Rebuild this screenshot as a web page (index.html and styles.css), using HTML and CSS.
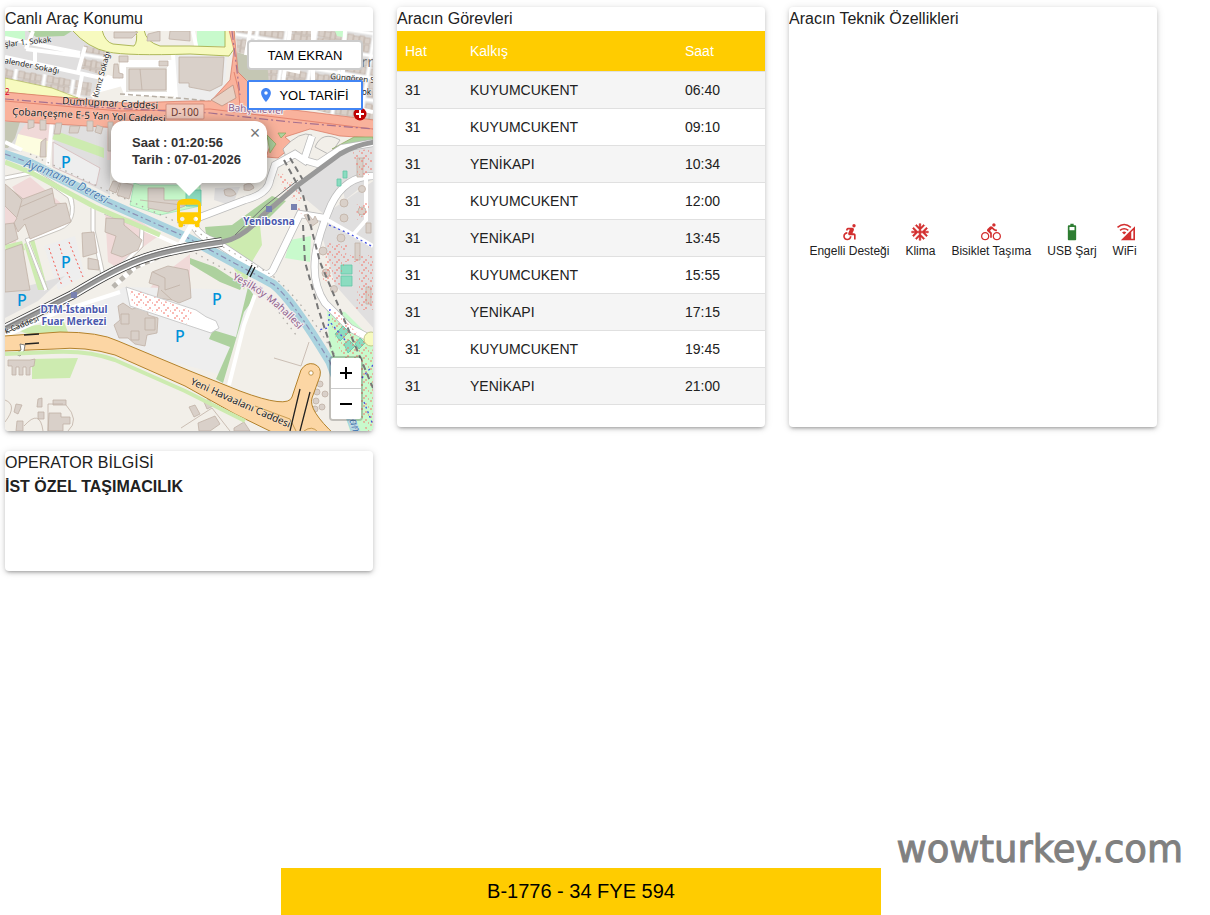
FILE: index.html
```html
<!DOCTYPE html>
<html lang="tr">
<head>
<meta charset="utf-8">
<title>B-1776 - 34 FYE 594</title>
<meta name="viewport" content="width=device-width, initial-scale=1">
<link rel="stylesheet" href="styles.css">
</head>
<body>
<main class="cards">
  <section class="card">
    <h2 class="card-title">Canlı Araç Konumu</h2>
    <div class="map">
      <svg class="map-canvas" viewBox="5 31 368 400" preserveAspectRatio="xMidYMid slice" role="img" aria-label="Yenibosna haritası">
        <defs>
          <pattern id="blocks" width="29" height="22" patternUnits="userSpaceOnUse" patternTransform="rotate(9)">
            <rect width="29" height="22" fill="#e0dfdf"/>
            <g fill="#d9d0c9" stroke="#c0b1a6" stroke-width=".7"><path d="M1 1h6v7H1zM7 2h6v6H7zM13 1h5v8h-5zM18 2h6v6h-6zM1 10h5v6H1zM6 9h7v7H6zM13 10h6v6h-6zM19 9h5v7h-5z"/></g>
            <path d="M0 19h29M27 0v22" stroke="#fff" stroke-width="3"/>
          </pattern>
          <pattern id="trees" width="9" height="8" patternUnits="userSpaceOnUse">
            <path d="M1 1h2M6 3v2M3 6h2M8 7h1" stroke="#f3766c" stroke-width="1"/>
          </pattern>
          <path id="river-label" d="M24 167Q54 175 112 208"/>
          <path id="mahalle-label" d="M232 279Q270 296 306 338"/>
          <path id="havaalani-label" d="M190 384Q232 403 296 431"/>
          <path id="e5-label" d="M12 115L190 124"/>
        </defs>
        <rect x="5" y="31" width="368" height="400" fill="#f2efe9"/>

        <!-- land use -->
        <path fill="#e0dfdf" d="M5 31H74L108 50 92 99 5 76z"/>
        <path fill="#c8facc" d="M5 31H25V40L5 38z"/>
        <path fill="#aed1a0" d="M28 31H72L64 36 36 37z"/>
        <path fill="#e0dfdf" d="M5 120H110V195L52 166 54 140 25 128 22 152 5 150z"/>
        <path fill="#c5c7b4" d="M5 122H20L15 138 8 148H5z"/>
        <path fill="#f0d9d8" d="M28 121H50V144L18 134zM107 122H115V160H107z"/>
        <path fill="#fdfde0" d="M18 134L48 141 46 158 14 148z"/>
        <path fill="#cdebb0" d="M56 131L104 148V158L52 139z"/>
        <path fill="#eee" d="M53 142L100 168 96 186 53 167z" stroke="#d9c4c4"/>
        <path fill="#f0d9d8" d="M12 187L30 177 62 204 30 215zM105 212L140 221 160 235 150 242 116 267 108 262zM157 279L190 254V300L148 291zM5 206H18L16 243H5z"/>
        <path fill="#eee" d="M44 246L75 236 85 276 58 290z"/>
        <path fill="#e0dfdf" d="M5 292L65 276 38 301 5 318z"/>
        <path fill="#eee" d="M95 302L124 287 255 290 240 330 222 375 110 345 68 331z"/>
        <path fill="#c8facc" stroke="#8fdcae" stroke-width=".6" d="M134 183L140 185H200V206L160 215 130 205z"/>
        <path fill="#e0dfdf" d="M215 188L240 187 232 206 214 200zM290 186L340 156 345 185 325 215zM318 219L375 180V330L335 285zM335 150L373 145V178L345 200z"/>
        <path fill="#cdebb0" d="M222 243L260 225 262 245 253 260 244 290z M32 359L78 358 70 378 32 379zM12 328L64 322 68 332 35 337zM5 245L22 241 25 250 6 255z"/>
        <path fill="#add19e" d="M205 227L232 225 272 196 286 201 265 222 225 242 207 241zM248 287L255 297 244 312 223 383 216 379 230 347 209 339 213 330 236 337zM190 258L215 267 243 285 240 290 220 282 190 264z"/>
        <path fill="#c8facc" d="M290 240L311 236 310 262 285 258zM327 310L345 312 373 340V431H350L331 370z"/>
        <path fill="#cdebb0" d="M24 244L34 239 48 290 38 290z"/>
        <path fill="#c5c7b4" d="M237 52L268 62 270 82 236 79z"/>
        <path fill="#eee" d="M172 53L227 56 225 88 210 103H178z"/>
        <path fill="url(#blocks)" d="M236 31H373V125L270 98 267 60 237 52z"/>
        <path fill="url(#blocks)" d="M5 67L92 83 90 96 42 90 5 80zM84 45L108 52 99 74 80 68z"/>
        <path fill="#fff" stroke="#fff" stroke-width="4" d="M108 77L122 82V62H172V94H126L122 84 97 91z"/>
        <path fill="#e4e1dc" d="M126 67H167V92H126z"/>
        <path fill="#c8facc" d="M197 31H226V46H197zM335 31H347V38L337 36z"/>

        <!-- minor streets -->
        <g fill="none" stroke="#fff" stroke-width="4">
          <path d="M5 38L80 53M26 49L80 56M5 57L120 82M35 51V63M85 47L78 72M173 54L176 98M197 50L193 31M52 120L48 165M82 75L78 97M33 31L26 49M108 77L92 97"/>
          <path d="M5 142L22 150M250 61L300 72M265 88L373 112M290 31L282 90M313 31V106M345 31L341 110M250 31L246 55"/>
        </g>
        <path fill="none" stroke="#b7afa5" stroke-width="1.5" stroke-dasharray="5 3" d="M120 94L190 99 214 102"/>

        <!-- yellow roads -->
        <path fill="#f7fabf" stroke="#a6b14c" stroke-width=".9" d="M72 30Q88 48 108 52T190 54L229 56 234 49V30H225V47L190 46H160Q146 42 144 30H136Q138 42 134 46L113 44Q105 42 102 30z"/>
        <path fill="#f7fabf" stroke="#a6b14c" stroke-width=".6" d="M5 78L52 88 78 98 50 97 5 92z"/>

        <!-- motorway -->
        <path fill="#f9b29c" stroke="#d7735c" stroke-width=".7" d="M4 92L125 103 190 101 211 101 230 80 234 50 229 30H234L238 72 248 82 262 90 270 107 310 112 374 120V138L340 136 310 129 285 137 294 145 278 158 266 157 272 140 222 128H120L4 121z"/>
        <path fill="none" stroke="#de7763" stroke-width=".8" d="M5 101L120 111 210 109 373 129M234 72Q240 90 240 106"/>
        <path fill="none" stroke="#a7718f" stroke-width="1.2" stroke-dasharray="9 3 2 3" d="M5 99L110 108 210 113 290 122 373 129M232 31L240 95"/>
        <path fill="#e7d2c6" stroke="#c79c8c" d="M211 100L233 85 236 98 222 106z"/>
        <path fill="#f2efe9" stroke="#aaa" stroke-width=".8" d="M283 149Q300 130 312 135L302 157H286zM315 147Q322 130 340 140L330 155z"/>
        <path fill="#add19e" stroke="#8ca55a" stroke-width=".7" d="M332 149L354 137H373V142L342 148zM267 135L276 144 270 153zM278 133H286L281 138z"/>

        <!-- wider white roads -->
        <g fill="none" stroke="#bbb" stroke-width="8">
          <path d="M195 219L245 200Q268 194 270 180L275 165 295 154 304 160 312 136M304 160L318 164 342 148 373 143"/>
          <path d="M194 226Q201 238 216 242L258 270Q268 278 273 270L300 214 324 218M373 176Q345 176 331 205C316 240 306 275 325 303L350 328 373 340"/>
        </g>
        <g fill="none" stroke="#fff" stroke-width="6.5">
          <path d="M195 219L245 200Q268 194 270 180L275 165 295 154 304 160 312 136M304 160L318 164 342 148 373 143"/>
          <path d="M194 226Q201 238 216 242L258 270Q268 278 273 270L300 214 324 218M373 176Q345 176 331 205C316 240 306 275 325 303L350 328 373 340"/>
          <path stroke-width="4" d="M324 218L373 246M366 178V220L352 236M255 295L244 325 229 385M5 336L58 312 120 292"/>
        </g>
        <path fill="none" stroke="#fff" stroke-width="4" d="M5 178L35 172 70 196Q78 220 60 228L27 240 46 290M93 208V230L103 275M104 212L142 227 141 245 112 275M143 229L190 250"/>
        <path fill="none" stroke="#bdb9b3" stroke-width=".8" d="M5 176L35 170 72 194Q80 222 60 230L29 242 48 290M5 180L35 174 68 198Q76 218 60 226L25 239 44 290M91 208V230L101 275M95 208V230L105 275M104 214L140 228 139 245 112 273M106 211L144 227 143 247 114 275"/>

        <!-- river -->
        <path fill="none" stroke="#cdebb0" stroke-width="5" d="M5 162L30 172 95 207 160 235"/>
        <path fill="none" stroke="#aad3df" stroke-width="9" d="M4 154L30 163 107 202 188 238 273 284Q292 299 330 362L357 435"/>
        <path fill="none" stroke="#8b8fb5" stroke-width="1.2" stroke-dasharray="6 3 2 3" d="M5 154L30 163M107 202L188 238 273 284Q292 299 330 362L357 431"/>
        <path fill="none" stroke="#b0aca6" stroke-width="1.3" stroke-dasharray="1.5 5" d="M30 154L110 192 190 228 270 274Q300 296 338 360M190 250L262 290 296 335"/>

        <!-- buildings -->
        <g fill="#d9d0c9" stroke="#c0b1a6" stroke-width=".8">
          <path d="M129 69H166V90H129zM119 56H128V62H119zM159 61H168V66H159zM114 64H118L119 73 123 74V78H113zM179 57H224L222 85 210 91 189 87V83H179zM148 34L160 31V41H147zM170 31H190V41L169 39zM114 32H138L132 38H114z"/>
          <path d="M28 120H34V127L28 129zM40 120H46V130H40zM56 123H62L60 134H54zM70 126H80L78 133H69zM87 121H93V131H87zM97 125L103 127 101 134 95 132zM41 142L46 138V157H40zM108 122H113V151H108z"/>
          <path d="M5 184L12 190 23 199 52 188 55 204 66 203 71 222 30 239 25 224 18 232 14 223 17 218 5 206zM12 190L22 200 17 217M20 207L53 193M23 220L57 205M5 224L14 223 18 239 5 245zM5 250L22 244 30 290 5 292z"/>
          <path d="M106 218L124 219V225L142 240 138 250 122 257 111 253 116 236 105 232zM82 233L94 232 97 253 83 257zM88 258L98 260 99 270 88 269zM113 181L120 182 116 193 109 190zM121 182L133 185 129 199 117 195z"/>
          <path d="M148 188H164V200H185V206L168 212 148 208zM224 190Q232 186 236 194 231 198 225 195zM244 185Q252 181 254 188 250 192 244 190z"/>
          <path d="M152 272L168 266 188 270 190 283 191 298 179 303 172 300 157 298 159 286 149 283z"/>
          <path d="M118 306L123 303 132 309 147 305 148 315 158 318 157 333 147 335 145 346 135 344 128 338 119 338 114 325 120 320z"/>
          <path d="M8 360H30L35 359 34 366 30 367V375H26V367H23V375H19V367H16V375H12V366H8z"/>
          <path d="M38 399L42 398V407H37zM53 400H66V405H53zM16 404L22 405 18 414 14 412zM38 412H44V419H38zM49 413H61V417H70V424H63V431H48zM17 421H23V431H16zM189 407L195 405 200 414 194 417zM204 402L209 399 213 406 207 409zM198 423L215 416 220 424 210 431H199zM234 428L244 422 250 431H234z"/>
          <path d="M304 215L308 214 313 220 315 216 318 222 311 227z"/>
          <path d="M357 158H363V177H357zM355 243H360V260H355zM366 223H371V233H366zM366 287H371V304H366z"/>
          <circle cx="344" cy="203" r="4"/><circle cx="344" cy="218" r="4"/><circle cx="362" cy="189" r="3.5"/><circle cx="362" cy="211" r="4"/><circle cx="341" cy="238" r="4"/><circle cx="323" cy="251" r="4"/><circle cx="326" cy="273" r="4"/><circle cx="334" cy="289" r="3.5"/>
          <circle cx="320" cy="384" r="3"/><circle cx="317" cy="392" r="3"/><circle cx="325" cy="394" r="3"/><circle cx="316" cy="401" r="3"/><circle cx="322" cy="407" r="3"/><circle cx="315" cy="409" r="3"/>
        </g>
        <g fill="none" stroke="#c0b1a6" stroke-width=".8">
          <path d="M121 314H129V324H121zM145 318H155V330H145zM131 331H139V340H131zM140 69L142 90M153 272L165 278V290L180 285M161 290L172 300"/>
          <path d="M140 200L190 206M5 422Q18 405 5 400M24 426Q40 408 43 431M48 431V404H63M66 405Q80 420 68 431M181 428L212 408 230 431M274 358L301 366 309 342"/>
        </g>
        <g fill="#8bdcc0" stroke="#63c5a6" stroke-width=".8">
          <path d="M186 190L201 190V206H186zM337 179H341V186H337zM343 171H347V178H343zM341 265H352V274H341zM341 276H352V286H341zM335 334L343 326 349 332 340 341zM344 344L349 340 355 346 348 353zM355 344L360 338 365 343 359 349z"/>
        </g>

        <!-- paths, hedges and pitches -->
        <path fill="none" stroke="#f35e55" stroke-width="1" stroke-dasharray="2 2.5" d="M49 248L62 286M59 244L62 254M67 272L72 282M69 242L83 277"/>
        <path fill="#fff" stroke="#ccc" d="M126 287L196 310Q206 318 216 321L219 328 211 333 190 326 130 306z"/>
        <path fill="url(#trees)" d="M130 288L192 311 188 324 132 304zM276 168L300 190 302 202 285 194zM290 186L302 214 298 212zM328 243L348 245 340 285 322 280zM353 152L372 148V175H358zM360 260H373V310H356zM335 310L373 350V431H366L330 320zM356 205L370 200V212L357 220zM326 255H373V262H326z"/>
        <path fill="none" stroke="#777" stroke-width="2" stroke-dasharray="6 4" d="M284 160L303 195 313 235 320 262 373 388M290 158L303 180M303 225L305 262 318 308 345 390"/>
        <path fill="none" stroke="#4552e0" stroke-width="1.3" stroke-dasharray="2 3" d="M329 225L350 234 373 247M330 309L328 328 318 330M362 378L373 365M364 402L373 425M345 340L330 322"/>

        <!-- railway -->
        <path fill="none" stroke="#fff" stroke-width="5" d="M113 287L135 267 170 252 178 248 192 224"/>
        <path fill="none" stroke="#b9b5ae" stroke-width="5" stroke-dasharray="5 5" d="M113 287L135 267 170 252"/>
        <path fill="none" stroke="#333" stroke-width="9.5" d="M4 329L72 295Q118 267 145 258T222 242"/>
        <path fill="none" stroke="#fff" stroke-width="8" d="M4 329L72 295Q118 267 145 258T222 242"/>
        <path fill="none" stroke="#999" stroke-width="5" d="M4 329L72 295Q118 267 145 258T222 242Q243 238 263 215L298 185 340 154Q355 145 374 142"/>
        <path fill="none" stroke="#777" stroke-width="1" d="M5 327L72 293Q118 265 145 256T222 240M235 235L265 206 298 180"/>
        <path fill="none" stroke="#222" stroke-width="1.4" d="M247 275L252 265M250 277L255 267"/>

        <!-- orange road -->
        <path fill="#fcd6a4" stroke="#b3822c" stroke-width="1" d="M4 336L60 332Q100 332 118 341L190 371 240 391Q288 409 292 397L301 370Q306 362 314 364 322 367 320 376L312 398Q308 410 335 435H278L235 414 185 386 115 355Q85 346 55 349L4 351z"/>
        <path fill="none" stroke="#b3822c" stroke-width=".7" d="M255 406L290 419 296 431M304 431Q312 425 318 432"/>
        <circle cx="311" cy="373" r="2.2" fill="#fff" stroke="#b3822c" stroke-width=".8"/>
        <path fill="none" stroke="#222" stroke-width="1.3" d="M300 389L290 431M310 392L300 431M24 335L39 334M25 344L39 343"/>
        <path fill="#fff" stroke="#666" stroke-width=".8" d="M20 344L25 345 24 351 20 356 16 354 21 350z"/>
        <path fill="none" stroke="#cdebb0" stroke-width="4" d="M5 354L52 352Q88 350 115 360L185 391 245 421"/>
        <circle cx="371" cy="339" r="7" fill="#f7fabf" stroke="#c2c78a"/>

        <!-- labels -->
        <g class="street">
          <text x="5" y="47" transform="rotate(-6 5 47)" font-size="8">şlar 1. Sokak</text>
          <text x="4" y="63" transform="rotate(11 4 63)" font-size="8">alender Sokağı</text>
          <text x="98" y="98" transform="rotate(-75 98 98)" font-size="8">Kımız Sokağı</text>
          <text x="62" y="104" transform="rotate(3 62 104)" font-size="10">Dumlupınar Caddesi</text>
          <text font-size="10"><textPath href="#e5-label">Çobançeşme E-5 Yan Yol Caddesi</textPath></text>
          <text x="330" y="79" transform="rotate(5 330 79)" font-size="8">Güngören S</text>
          <text x="362" y="95" font-size="8">ok</text>
          <text x="6" y="334" transform="rotate(-22 6 334)" font-size="8">k Caddesi</text>
          <text font-size="10"><textPath href="#havaalani-label">Yeni Havaalanı Caddesi</textPath></text>
        </g>
        <rect x="166" y="104" width="38" height="15" rx="1" fill="#f0cabd" stroke="#d48f7e"/>
        <text x="171" y="116" class="shield">D-100</text>
        <text class="water"><textPath href="#river-label">Ayamama Deresi</textPath></text>
        <text x="349" y="420" class="water" transform="rotate(72 349 420)">am</text>
        <text class="area"><textPath href="#mahalle-label">Yeşilköy Mahallesi</textPath></text>
        <text x="228" y="111" class="area" transform="rotate(3 228 111)" font-size="10">Bahçelievler</text>
        <text x="361" y="67" class="area-lg">rr</text>
        <g class="station">
          <text x="269" y="225" text-anchor="middle">Yenibosna</text>
          <text x="74" y="313" text-anchor="middle">DTM-İstanbul</text>
          <text x="74" y="325" text-anchor="middle">Fuar Merkezi</text>
        </g>
        <path fill="#7981b0" d="M266 206H272V212H266zM291 204H297V210H291zM71 292H77V298H71z"/>
        <g class="parking">
          <text x="61" y="168">P</text><text x="61" y="268">P</text><text x="17" y="306">P</text><text x="212" y="305">P</text><text x="175" y="342">P</text>
        </g>
        <circle cx="360" cy="114" r="6.5" fill="#bf0000"/>
        <path stroke="#fff" stroke-width="2" d="M356 114H364M360 110V118"/>
        <text x="5" y="95" fill="#d40032" font-size="8">2</text>
      </svg>

      <svg class="bus" viewBox="4 2 16 19" aria-label="Otobüs" role="img"><path fill="#fc0" d="M4 16c0 .88.39 1.67 1 2.22V20c0 .55.45 1 1 1h1c.55 0 1-.45 1-1v-1h8v1c0 .55.45 1 1 1h1c.55 0 1-.45 1-1v-1.78c.61-.55 1-1.34 1-2.22V6c0-3.5-3.58-4-8-4s-8 .5-8 4v10zm3.500 1c-.83 0-1.500-.67-1.500-1.500S6.670 14 7.500 14s1.500.67 1.500 1.500S8.330 17 7.500 17zm9 0c-.83 0-1.500-.67-1.500-1.500s.67-1.500 1.500-1.500 1.500.67 1.500 1.500-.67 1.500-1.500 1.500zm1.500-6H6V6h12v5z"/></svg>

      <div class="popup">
        <p>Saat : 01:20:56<br>Tarih : 07-01-2026</p>
        <button class="popup-close" type="button" aria-label="Kapat">×</button>
      </div>

      <div class="map-actions">
        <button class="map-button" type="button">TAM EKRAN</button>
        <button class="map-button map-button-route" type="button">
          <svg class="pin" viewBox="5 2 14 20" aria-hidden="true"><path fill="#4285f4" d="M12 2C8.130 2 5 5.130 5 9c0 5.250 7 13 7 13s7-7.750 7-13c0-3.870-3.130-7-7-7zm0 9.500a2.500 2.500 0 0 1 0-5 2.500 2.500 0 0 1 0 5z"/></svg>
          YOL TARİFİ
        </button>
      </div>

      <div class="zoom">
        <button type="button" aria-label="Yakınlaştır"><svg viewBox="0 0 14 14" aria-hidden="true"><path d="M7 1V13M1 7H13"/></svg></button>
        <button type="button" aria-label="Uzaklaştır"><svg viewBox="0 0 14 14" aria-hidden="true"><path d="M1 7H13"/></svg></button>
      </div>
    </div>
  </section>

  <section class="card card-tall">
    <h2 class="card-title">Aracın Görevleri</h2>
    <table class="trips">
      <colgroup><col class="col-line"><col class="col-from"><col class="col-time"></colgroup>
      <thead><tr><th scope="col">Hat</th><th scope="col">Kalkış</th><th scope="col">Saat</th></tr></thead>
      <tbody>
        <tr><td>31</td><td>KUYUMCUKENT</td><td>06:40</td></tr>
        <tr><td>31</td><td>KUYUMCUKENT</td><td>09:10</td></tr>
        <tr><td>31</td><td>YENİKAPI</td><td>10:34</td></tr>
        <tr><td>31</td><td>KUYUMCUKENT</td><td>12:00</td></tr>
        <tr><td>31</td><td>YENİKAPI</td><td>13:45</td></tr>
        <tr><td>31</td><td>KUYUMCUKENT</td><td>15:55</td></tr>
        <tr><td>31</td><td>YENİKAPI</td><td>17:15</td></tr>
        <tr><td>31</td><td>KUYUMCUKENT</td><td>19:45</td></tr>
        <tr><td>31</td><td>YENİKAPI</td><td>21:00</td></tr>
      </tbody>
    </table>
  </section>

  <section class="card card-tall">
    <h2 class="card-title">Aracın Teknik Özellikleri</h2>
    <ul class="features">
      <li>
        <svg class="icon" viewBox="0 0 24 24" aria-hidden="true"><circle cx="18" cy="4.540" r="2"/><path d="M15 17h-2c0 1.650-1.350 3-3 3s-3-1.350-3-3 1.350-3 3-3v-2c-2.760 0-5 2.240-5 5s2.240 5 5 5 5-2.240 5-5zm3-3.500h-1.860l1.670-3.670C18.420 8.500 17.440 7 15.960 7h-5.200c-.81 0-1.540.47-1.870 1.200L8.220 10l1.920.53.65-1.530H13l-1.830 4.100c-.6 1.330.39 2.900 1.850 2.900H18v5h2v-5.500c0-1.100-.9-2-2-2z"/></svg>
        <span>Engelli Desteği</span>
      </li>
      <li>
        <svg class="icon" viewBox="0 0 24 24" aria-hidden="true"><path stroke="#d32f2f" stroke-width=".6" d="M22 11h-4.170l3.240-3.240-1.410-1.420L15 11h-2V9l4.660-4.660-1.420-1.410L13 6.170V2h-2v4.170L7.760 2.930 6.340 4.340 11 9v2H9L4.340 6.340 2.930 7.760 6.170 11H2v2h4.170l-3.240 3.240 1.410 1.420L9 13h2v2l-4.660 4.660 1.420 1.410L11 17.830V22h2v-4.170l3.240 3.240 1.420-1.410L13 15v-2h2l4.660 4.660 1.410-1.420L17.830 13H22z"/></svg>
        <span>Klima</span>
      </li>
      <li>
        <svg class="icon" viewBox="0 0 24 24" aria-hidden="true"><path d="M15.500 5.500c1.100 0 2-.9 2-2s-.9-2-2-2-2 .9-2 2 .9 2 2 2zM5 12c-2.800 0-5 2.200-5 5s2.200 5 5 5 5-2.200 5-5-2.200-5-5-5zm0 8.500c-1.900 0-3.500-1.600-3.500-3.500s1.600-3.500 3.500-3.500 3.500 1.600 3.500 3.500-1.600 3.500-3.500 3.500zm5.800-10l2.400-2.400.8.8c1.300 1.300 3 2.100 5.100 2.100V9c-1.500 0-2.700-.6-3.600-1.500l-1.900-1.900c-.5-.4-1-.6-1.600-.6s-1.100.2-1.400.6L7.800 8.400c-.4.4-.6.9-.6 1.400 0 .6.2 1.100.6 1.400L11 14v5h2v-6.200l-2.200-2.300zM19 12c-2.800 0-5 2.200-5 5s2.200 5 5 5 5-2.200 5-5-2.200-5-5-5zm0 8.500c-1.900 0-3.500-1.600-3.500-3.500s1.600-3.500 3.500-3.500 3.500 1.600 3.500 3.500-1.600 3.500-3.500 3.500z"/></svg>
        <span>Bisiklet Taşıma</span>
      </li>
      <li>
        <svg class="icon icon-ok" viewBox="0 0 24 24" aria-hidden="true"><path fill-rule="evenodd" d="M15.670 4H14V2h-4v2H8.330C7.600 4 7 4.600 7 5.330v15.330C7 21.400 7.600 22 8.330 22h7.330c.74 0 1.340-.6 1.340-1.330V5.330C17 4.600 16.400 4 15.670 4zM9 6h6v4H9z"/></svg>
        <span>USB Şarj</span>
      </li>
      <li>
        <svg class="icon" viewBox="0 0 24 24" aria-hidden="true"><path fill-rule="evenodd" d="M24 22V5L7 22zM22 20h-2.500v-8L22 9.500z"/><path fill="none" stroke="#d32f2f" stroke-width="1.800" d="M3 6.500Q11 -.5 19 6.500M6 10Q11 6 16 10"/><path d="M8.500 12.500Q11 10.500 13.500 12.500L11 15z"/></svg>
        <span>WiFi</span>
      </li>
    </ul>
  </section>

  <section class="card card-operator">
    <h2 class="card-title">OPERATOR BİLGİSİ</h2>
    <p class="operator">İST ÖZEL TAŞIMACILIK</p>
  </section>
</main>

<footer class="footer">
  <div class="plate">B-1776 - 34 FYE 594</div>
</footer>
<div class="watermark">wowturkey.com</div>
</body>
</html>
```

FILE: styles.css
```css
* { box-sizing: border-box; }

body {
  margin: 0;
  min-height: 100vh;
  display: flex;
  flex-direction: column;
  justify-content: space-between;
  background: #fff;
  color: #212121;
  font: 16px/24px "Liberation Sans", Arial, sans-serif;
}

h2, p, ul { margin: 0; padding: 0; }

button { font-family: inherit; cursor: pointer; }

.cards {
  display: grid;
  grid-template-columns: repeat(3, 1fr);
  gap: 20px 24px;
  align-items: start;
  padding: 7px 53px 24px 5px;
}

.card {
  overflow: hidden;
  border-radius: 4px;
  background: #fff;
  box-shadow: 0 3px 3px -2px rgba(0, 0, 0, .2), 0 2px 4px rgba(0, 0, 0, .14), 0 1px 8px rgba(0, 0, 0, .12);
}

.card-tall {
  display: flex;
  flex-direction: column;
  min-height: 420px;
}

.card-operator { min-height: 120px; }

.card-title { font-size: 16px; font-weight: 400; line-height: 24px; }

.operator { font-weight: 700; }

/* map */
.map { position: relative; height: 400px; }

.map-canvas { display: block; width: 100%; height: 100%; }

.map-canvas text { font-family: "Noto Sans", sans-serif; }

.street text { fill: #222; stroke: rgba(255, 255, 255, .5); stroke-width: 1px; paint-order: stroke; }

.shield { font-size: 10px; fill: #6b3a33; }

.water { font-size: 12px; font-style: italic; fill: #4d80b3; stroke: #e4eff2; stroke-width: 1px; paint-order: stroke; }

.area { font-size: 10px; fill: #8d618b; stroke: #f5eef0; stroke-width: 2px; paint-order: stroke; }

.area-lg { font-size: 15px; fill: #777; }

.station { font-size: 10px; font-weight: 700; fill: #4b59ad; stroke: #fff; stroke-width: 2px; paint-order: stroke; }

.parking { font-size: 16px; font-weight: 500; fill: #0092da; }

.bus {
  position: absolute;
  left: 50%;
  top: 167px;
  width: 24px;
  height: 30px;
  margin-left: -12px;
}

.popup {
  position: absolute;
  left: 50%;
  top: 90px;
  width: 156px;
  margin-left: -78px;
  padding: 13px 21px 15px;
  border-radius: 12px;
  background: #fff;
  color: #333;
  font-size: 13px;
  font-weight: 700;
  line-height: 17px;
  white-space: nowrap;
  box-shadow: 0 3px 14px rgba(0, 0, 0, .4);
}

.popup::after {
  content: "";
  position: absolute;
  top: 100%;
  left: 50%;
  margin-left: -13px;
  border: 13px solid transparent;
  border-top-color: #fff;
  border-bottom: 0;
}

.popup-close {
  position: absolute;
  top: 0;
  right: 0;
  width: 24px;
  height: 24px;
  padding: 0;
  border: 0;
  background: none;
  color: #757575;
  font-size: 18px;
  line-height: 24px;
}

.map-actions {
  position: absolute;
  top: 9px;
  right: 10px;
  display: grid;
  gap: 10px;
}

.map-button {
  display: flex;
  align-items: center;
  justify-content: center;
  gap: 8px;
  width: 116px;
  height: 30px;
  padding: 0 10px;
  border: 2px solid #ccc;
  border-radius: 4px;
  background: #fff;
  color: #000;
  font-size: 13px;
}

.map-button-route { border-color: #4285f4; border-radius: 2px; }

.pin { width: 10px; height: 14px; }

.zoom {
  position: absolute;
  right: 10px;
  bottom: 10px;
  display: grid;
  border: 2px solid rgba(0, 0, 0, .2);
  border-radius: 4px;
  background-clip: padding-box;
}

.zoom button {
  display: grid;
  place-items: center;
  width: 30px;
  height: 30px;
  padding: 0;
  border: 0;
  border-radius: 0 0 2px 2px;
  background: #fff;
}

.zoom button:first-child { height: 31px; border-bottom: 1px solid #ccc; border-radius: 2px 2px 0 0; }

.zoom svg { width: 14px; height: 14px; fill: none; stroke: #000; stroke-width: 2; }

/* trips */
.trips {
  width: 100%;
  table-layout: fixed;
  border-collapse: collapse;
  font-size: 14px;
  line-height: 20px;
}

.col-line { width: 65px; }
.col-time { width: 88px; }

.trips th, .trips td { padding: 8px; text-align: left; border-bottom: 1px solid #e0e0e0; }

.trips th { padding: 10px 8px; background: #fc0; color: #fff; font-weight: 400; }

.trips tbody tr:nth-child(odd) { background: #f5f5f5; }

/* features */
.features {
  flex: 1;
  display: flex;
  align-items: center;
  justify-content: center;
  gap: 16px;
  list-style: none;
  padding-top: 24px;
}

.features li {
  display: flex;
  flex-direction: column;
  align-items: center;
  font-size: 12px;
  line-height: 18px;
  white-space: nowrap;
}

.icon { width: 20px; height: 20px; fill: #d32f2f; }

.icon-ok { fill: #2e7d32; }

/* footer */
.footer { display: flex; justify-content: center; padding-right: 48px; }

.plate {
  width: 600px;
  max-width: 100%;
  padding: 12px;
  background: #fc0;
  color: #000;
  font-size: 20px;
  line-height: 23px;
  text-align: center;
}

.watermark {
  position: absolute;
  right: 27px;
  bottom: 44px;
  color: #808080;
  font: 37px/42px "DejaVu Sans", Verdana, sans-serif;
  -webkit-text-stroke: 1px #808080;
}
```
